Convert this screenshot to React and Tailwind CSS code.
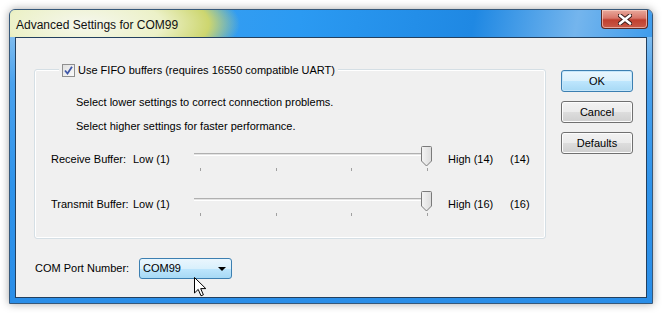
import React from "react";

const font = { fontFamily: '"Liberation Sans", Arial, sans-serif' };

function Slider() {
  const ticks = [6, 82, 157, 233];
  return (
    <svg width="238" height="26" viewBox="0 0 238 26" className="block">
      <rect x="0" y="7" width="238" height="1" fill="#b0b0b0" />
      <rect x="0" y="8" width="238" height="1" fill="#e3e3e3" />
      <rect x="0" y="9" width="238" height="1" fill="#ffffff" />
      {ticks.map((x) => (
        <rect key={x} x={x} y="22" width="1" height="3" fill="#a0a0a0" />
      ))}
      <defs>
        <linearGradient id="thumb" x1="0" y1="0" x2="1" y2="0">
          <stop offset="0" stopColor="#f4f4f4" />
          <stop offset="1" stopColor="#dcdcdc" />
        </linearGradient>
      </defs>
      <path
        d="M228.5 1.5 Q228.5 0.5 229.5 0.5 L237.5 0.5 Q238.5 0.5 238.5 1.5 L238.5 15 L233.5 20 L228.5 15 Z"
        transform="translate(-1 0)"
        fill="url(#thumb)"
        stroke="#7a7a7a"
        strokeWidth="1"
      />
    </svg>
  );
}

function SliderRow({ label, high, value, className }) {
  return (
    <div className={"flex h-[26px] items-center " + className}>
      <span className="w-[82px]">{label}</span>
      <span className="w-[61px]">Low (1)</span>
      <Slider />
      <span className="ml-[16px] w-[62px]">{high}</span>
      <span>{value}</span>
    </div>
  );
}

function Button({ children, primary }) {
  return (
    <div
      className={
        "flex h-[22px] w-[72px] items-center justify-center rounded-[3px] border text-[11px] " +
        (primary
          ? "border-[#3c7fb1] bg-[linear-gradient(180deg,#eaf6fd_0%,#d9f0fc_50%,#bee6fd_51%,#a7d9f5_100%)] shadow-[inset_0_0_0_1px_#c5e6fa]"
          : "border-[#707070] bg-[linear-gradient(180deg,#f2f2f2_0%,#ebebeb_50%,#dddddd_51%,#cfcfcf_100%)] shadow-[inset_0_0_0_1px_#fcfcfc]")
      }
    >
      {children}
    </div>
  );
}

export default function App() {
  return (
    <div className="relative h-[313px] w-[662px] bg-white pl-[9px] pt-[9px] text-[11px] text-black" style={font}>
      <div className="flex h-[295px] w-[644px] flex-col rounded-t-[6px] border border-[#36587a] bg-[linear-gradient(180deg,#9ccbef_0%,#4aa2ee_25%,#2f93ea_60%,#2a8ee8_100%)] shadow-[0_0_8px_rgba(0,0,0,0.35)]">
        <div className="flex h-[27px] items-start rounded-t-[5px] bg-[radial-gradient(ellipse_155px_52px_at_75px_14px,#f5f7ee_0%,#ecf1c8_50%,#cdd66f_80%,rgba(120,180,220,0)_100%),linear-gradient(100deg,#49a5f0_0%,#2b9af2_45%,#1f88e3_72%,#74b5ed_88%,#3f9cec_100%)]">
          <span className="ml-[6px] mt-[6px] text-[12px] text-[#111]">Advanced Settings for COM99</span>
          <div className="ml-auto mr-[4px] flex h-[19px] w-[47px] items-center justify-center rounded-b-[4px] border border-t-0 border-[#5a2a25] bg-[linear-gradient(180deg,#e9aa9c_0%,#d8766a_45%,#c0402f_55%,#c85a48_100%)] shadow-[inset_0_0_0_1px_rgba(255,220,210,0.6)]">
            <svg width="14" height="11" viewBox="0 0 14 11">
              <path d="M2 1.5 L12 9.5 M12 1.5 L2 9.5" stroke="#3a1d1a" strokeWidth="4.5" strokeLinecap="round" />
              <path d="M2 1.5 L12 9.5 M12 1.5 L2 9.5" stroke="#ffffff" strokeWidth="2.6" strokeLinecap="round" />
            </svg>
          </div>
        </div>
        <div className="relative mx-[5px] mb-[5px] flex-1 border border-[#23405f] bg-[#f0f0f0]">
          <div className="flex items-start pl-[18px] pt-[31px]">
            <div className="relative h-[170px] w-[512px] rounded-[3px] border border-[#d5dfe5] shadow-[inset_0_0_0_1px_#ffffff]">
              <div className="absolute -top-[8px] left-[24px] flex items-center bg-[#f0f0f0] px-[3px]">
                <div className="flex h-[13px] w-[13px] items-center justify-center border border-[#8f8f8f] bg-[linear-gradient(135deg,#e0e0e0,#fafafa)]">
                  <svg width="9" height="9" viewBox="0 0 9 9">
                    <path d="M1 4.5 L3.5 7.5 L8 0.8" fill="none" stroke="#3f57a8" strokeWidth="1.8" />
                  </svg>
                </div>
                <span className="ml-[3px]">Use FIFO buffers (requires 16550 compatible UART)</span>
              </div>
              <div className="pl-[41px] pt-[25px] leading-[14px]">
                <div>Select lower settings to correct connection problems.</div>
                <div className="mt-[10px]">Select higher settings for faster performance.</div>
              </div>
              <div className="pl-[16px]">
                <SliderRow className="mt-[13px]" label="Receive Buffer:" high="High (14)" value="(14)" />
                <SliderRow className="mt-[19px]" label="Transmit Buffer:" high="High (16)" value="(16)" />
              </div>
            </div>
            <div className="ml-[15px] mt-[1px] flex flex-col gap-[9px]">
              <Button primary>OK</Button>
              <Button>Cancel</Button>
              <Button>Defaults</Button>
            </div>
          </div>
          <div className="mt-[19px] flex items-center pl-[19px]">
            <span className="w-[104px]">COM Port Number:</span>
            <div className="flex h-[21px] w-[93px] items-center rounded-[3px] border border-[#3c7fb1] bg-[linear-gradient(180deg,#eaf6fd_0%,#d9f0fc_50%,#bee6fd_51%,#a7d9f5_100%)] pl-[3px] pr-[5px]">
              <span>COM99</span>
              <svg className="ml-auto" width="8" height="4" viewBox="0 0 8 4">
                <path d="M0 0 L8 0 L4 4 Z" fill="#000" />
              </svg>
            </div>
          </div>
        </div>
      </div>
      <svg className="absolute left-[194px] top-[277px]" width="13" height="20" viewBox="0 0 13 20">
        <path d="M0.5 0.5 L0.5 16 L4.2 12.4 L7 18.8 L9.4 17.8 L6.7 11.6 L11.8 11.6 Z" fill="#fff" stroke="#000" strokeWidth="1" strokeLinejoin="round" />
      </svg>
    </div>
  );
}
